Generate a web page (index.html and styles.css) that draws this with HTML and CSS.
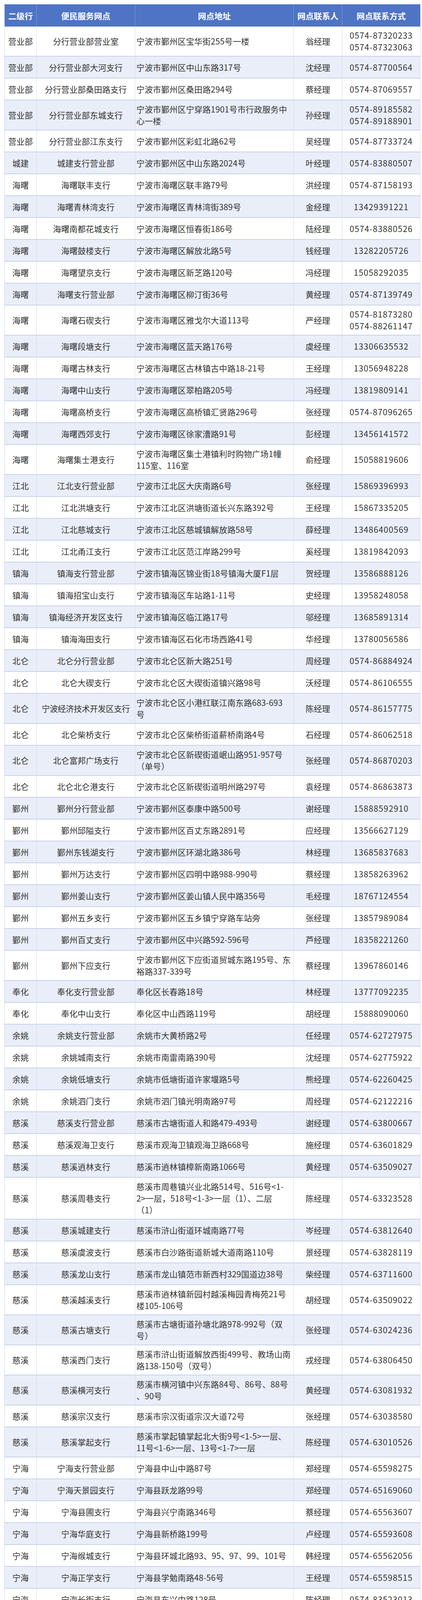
FILE: index.html
```html
<!DOCTYPE html>
<html lang="zh-CN">
<head>
<meta charset="utf-8">
<title>便民服务网点</title>
<link rel="stylesheet" href="styles.css">
</head>
<body>
<div class="page">
<table class="outlets">
<colgroup>
<col class="c-branch"><col class="c-name"><col class="c-addr"><col class="c-person"><col class="c-phone">
</colgroup>
<thead>
<tr><th>二级行</th><th>便民服务网点</th><th>网点地址</th><th>网点联系人</th><th>网点联系方式</th></tr>
</thead>
<tbody>
<tr><td>营业部</td><td>分行营业部营业室</td><td class="addr">宁波市鄞州区宝华街255号一楼</td><td>翁经理</td><td class="tel">0574-87320233<br>0574-87323063</td></tr>
<tr><td>营业部</td><td>分行营业部大河支行</td><td class="addr">宁波市鄞州区中山东路317号</td><td>沈经理</td><td class="tel">0574-87700564</td></tr>
<tr><td>营业部</td><td>分行营业部桑田路支行</td><td class="addr">宁波市鄞州区桑田路294号</td><td>蔡经理</td><td class="tel">0574-87069557</td></tr>
<tr><td>营业部</td><td>分行营业部东城支行</td><td class="addr">宁波市鄞州区宁穿路1901号市行政服务中<br>心一楼</td><td>孙经理</td><td class="tel">0574-89185582<br>0574-89188901</td></tr>
<tr><td>营业部</td><td>分行营业部江东支行</td><td class="addr">宁波市鄞州区彩虹北路62号</td><td>吴经理</td><td class="tel">0574-87733724</td></tr>
<tr><td>城建</td><td>城建支行营业部</td><td class="addr">宁波市鄞州区中山东路2024号</td><td>叶经理</td><td class="tel">0574-83880507</td></tr>
<tr><td>海曙</td><td>海曙联丰支行</td><td class="addr">宁波市海曙区联丰路79号</td><td>洪经理</td><td class="tel">0574-87158193</td></tr>
<tr><td>海曙</td><td>海曙青林湾支行</td><td class="addr">宁波市海曙区青林湾街389号</td><td>金经理</td><td class="tel">13429391221</td></tr>
<tr><td>海曙</td><td>海曙南都花城支行</td><td class="addr">宁波市海曙区恒春街186号</td><td>陆经理</td><td class="tel">0574-83880526</td></tr>
<tr><td>海曙</td><td>海曙鼓楼支行</td><td class="addr">宁波市海曙区解放北路5号</td><td>钱经理</td><td class="tel">13282205726</td></tr>
<tr><td>海曙</td><td>海曙望京支行</td><td class="addr">宁波市海曙区新芝路120号</td><td>冯经理</td><td class="tel">15058292035</td></tr>
<tr><td>海曙</td><td>海曙支行营业部</td><td class="addr">宁波市海曙区柳汀街36号</td><td>黄经理</td><td class="tel">0574-87139749</td></tr>
<tr><td>海曙</td><td>海曙石碶支行</td><td class="addr">宁波市海曙区雅戈尔大道113号</td><td>严经理</td><td class="tel">0574-81873280<br>0574-88261147</td></tr>
<tr><td>海曙</td><td>海曙段塘支行</td><td class="addr">宁波市海曙区蓝天路176号</td><td>虞经理</td><td class="tel">13306635532</td></tr>
<tr><td>海曙</td><td>海曙古林支行</td><td class="addr">宁波市海曙区古林镇古中路18-21号</td><td>王经理</td><td class="tel">13056948228</td></tr>
<tr><td>海曙</td><td>海曙中山支行</td><td class="addr">宁波市海曙区翠柏路205号</td><td>冯经理</td><td class="tel">13819809141</td></tr>
<tr><td>海曙</td><td>海曙高桥支行</td><td class="addr">宁波市海曙区高桥镇汇贤路296号</td><td>张经理</td><td class="tel">0574-87096265</td></tr>
<tr><td>海曙</td><td>海曙西郊支行</td><td class="addr">宁波市海曙区徐家漕路91号</td><td>彭经理</td><td class="tel">13456141572</td></tr>
<tr><td>海曙</td><td>海曙集士港支行</td><td class="addr">宁波市海曙区集士港镇利时购物广场1幢<br>115室、116室</td><td>俞经理</td><td class="tel">15058819606</td></tr>
<tr><td>江北</td><td>江北支行营业部</td><td class="addr">宁波市江北区大庆南路6号</td><td>张经理</td><td class="tel">15869396993</td></tr>
<tr><td>江北</td><td>江北洪塘支行</td><td class="addr">宁波市江北区洪塘街道长兴东路392号</td><td>王经理</td><td class="tel">15867335205</td></tr>
<tr><td>江北</td><td>江北慈城支行</td><td class="addr">宁波市江北区慈城镇解放路58号</td><td>薛经理</td><td class="tel">13486400569</td></tr>
<tr><td>江北</td><td>江北甬江支行</td><td class="addr">宁波市江北区范江岸路299号</td><td>奚经理</td><td class="tel">13819842093</td></tr>
<tr><td>镇海</td><td>镇海支行营业部</td><td class="addr">宁波市镇海区锦业街18号镇海大厦F1层</td><td>贺经理</td><td class="tel">13586888126</td></tr>
<tr><td>镇海</td><td>镇海招宝山支行</td><td class="addr">宁波市镇海区车站路1-11号</td><td>史经理</td><td class="tel">13958248058</td></tr>
<tr><td>镇海</td><td>镇海经济开发区支行</td><td class="addr">宁波市镇海区临江路17号</td><td>邬经理</td><td class="tel">13685891314</td></tr>
<tr><td>镇海</td><td>镇海海田支行</td><td class="addr">宁波市镇海区石化市场西路41号</td><td>华经理</td><td class="tel">13780056586</td></tr>
<tr><td>北仑</td><td>北仑分行营业部</td><td class="addr">宁波市北仑区新大路251号</td><td>周经理</td><td class="tel">0574-86884924</td></tr>
<tr><td>北仑</td><td>北仑大碶支行</td><td class="addr">宁波市北仑区大碶街道镇兴路98号</td><td>沃经理</td><td class="tel">0574-86106555</td></tr>
<tr><td>北仑</td><td class="tight">宁波经济技术开发区支行</td><td class="addr">宁波市北仑区小港红联江南东路683-693<br>号</td><td>陈经理</td><td class="tel">0574-86157775</td></tr>
<tr><td>北仑</td><td>北仑柴桥支行</td><td class="addr">宁波市北仑区柴桥街道薪桥南路4号</td><td>石经理</td><td class="tel">0574-86062518</td></tr>
<tr><td>北仑</td><td>北仑富邦广场支行</td><td class="addr">宁波市北仑区新碶街道岷山路951-957号<br>（单号）</td><td>张经理</td><td class="tel">0574-86870203</td></tr>
<tr><td>北仑</td><td>北仑北仑港支行</td><td class="addr">宁波市北仑区新碶街道明州路297号</td><td>袁经理</td><td class="tel">0574-86863873</td></tr>
<tr><td>鄞州</td><td>鄞州分行营业部</td><td class="addr">宁波市鄞州区泰康中路500号</td><td>谢经理</td><td class="tel">15888592910</td></tr>
<tr><td>鄞州</td><td>鄞州邱隘支行</td><td class="addr">宁波市鄞州区百丈东路2891号</td><td>应经理</td><td class="tel">13566627129</td></tr>
<tr><td>鄞州</td><td>鄞州东钱湖支行</td><td class="addr">宁波市鄞州区环湖北路386号</td><td>林经理</td><td class="tel">13685837683</td></tr>
<tr><td>鄞州</td><td>鄞州万达支行</td><td class="addr">宁波市鄞州区四明中路988-990号</td><td>蔡经理</td><td class="tel">13858263962</td></tr>
<tr><td>鄞州</td><td>鄞州姜山支行</td><td class="addr">宁波市鄞州区姜山镇人民中路356号</td><td>毛经理</td><td class="tel">18767124554</td></tr>
<tr><td>鄞州</td><td>鄞州五乡支行</td><td class="addr">宁波市鄞州区五乡镇宁穿路车站旁</td><td>张经理</td><td class="tel">13857989084</td></tr>
<tr><td>鄞州</td><td>鄞州百丈支行</td><td class="addr">宁波市鄞州区中兴路592-596号</td><td>芦经理</td><td class="tel">18358221260</td></tr>
<tr><td>鄞州</td><td>鄞州下应支行</td><td class="addr">宁波市鄞州区下应街道贸城东路195号、东<br>裕路337-339号</td><td>蔡经理</td><td class="tel">13967860146</td></tr>
<tr><td>奉化</td><td>奉化支行营业部</td><td class="addr">奉化区长春路18号</td><td>林经理</td><td class="tel">13777092235</td></tr>
<tr><td>奉化</td><td>奉化中山支行</td><td class="addr">奉化区中山西路119号</td><td>胡经理</td><td class="tel">15888090060</td></tr>
<tr><td>余姚</td><td>余姚支行营业部</td><td class="addr">余姚市大黄桥路2号</td><td>任经理</td><td class="tel">0574-62727975</td></tr>
<tr><td>余姚</td><td>余姚城南支行</td><td class="addr">余姚市南雷南路390号</td><td>沈经理</td><td class="tel">0574-62775922</td></tr>
<tr><td>余姚</td><td>余姚低塘支行</td><td class="addr">余姚市低塘街道许家堰路5号</td><td>熊经理</td><td class="tel">0574-62260425</td></tr>
<tr><td>余姚</td><td>余姚泗门支行</td><td class="addr">余姚市泗门镇光明南路97号</td><td>周经理</td><td class="tel">0574-62122216</td></tr>
<tr><td>慈溪</td><td>慈溪支行营业部</td><td class="addr">慈溪市古塘街道人和路479-493号</td><td>谢经理</td><td class="tel">0574-63800667</td></tr>
<tr><td>慈溪</td><td>慈溪观海卫支行</td><td class="addr">慈溪市观海卫镇观海卫路668号</td><td>施经理</td><td class="tel">0574-63601829</td></tr>
<tr><td>慈溪</td><td>慈溪逍林支行</td><td class="addr">慈溪市逍林镇樟新南路1066号</td><td>黄经理</td><td class="tel">0574-63509027</td></tr>
<tr><td>慈溪</td><td>慈溪周巷支行</td><td class="addr">慈溪市周巷镇兴业北路514号、516号&lt;1-<br>2&gt;一层，518号&lt;1-3&gt;一层（1）、二层<br>（1）</td><td>陈经理</td><td class="tel">0574-63323528</td></tr>
<tr><td>慈溪</td><td>慈溪城建支行</td><td class="addr">慈溪市浒山街道环城南路77号</td><td>岑经理</td><td class="tel">0574-63812640</td></tr>
<tr><td>慈溪</td><td>慈溪虞波支行</td><td class="addr">慈溪市白沙路街道新城大道南路110号</td><td>景经理</td><td class="tel">0574-63828119</td></tr>
<tr><td>慈溪</td><td>慈溪龙山支行</td><td class="addr">慈溪市龙山镇范市新西村329国道边38号</td><td>柴经理</td><td class="tel">0574-63711600</td></tr>
<tr><td>慈溪</td><td>慈溪越溪支行</td><td class="addr">慈溪市逍林镇新园村越溪梅园青梅苑21号<br>楼105-106号</td><td>胡经理</td><td class="tel">0574-63509022</td></tr>
<tr><td>慈溪</td><td>慈溪古塘支行</td><td class="addr">慈溪市古塘街道孙塘北路978-992号（双<br>号）</td><td>张经理</td><td class="tel">0574-63024236</td></tr>
<tr><td>慈溪</td><td>慈溪西门支行</td><td class="addr">慈溪市浒山街道解放西街499号、教场山南<br>路138-150号（双号）</td><td>戎经理</td><td class="tel">0574-63806450</td></tr>
<tr><td>慈溪</td><td>慈溪横河支行</td><td class="addr">慈溪市横河镇中兴东路84号、86号、88号<br>、90号</td><td>黄经理</td><td class="tel">0574-63081932</td></tr>
<tr><td>慈溪</td><td>慈溪宗汉支行</td><td class="addr">慈溪市宗汉街道宗汉大道72号</td><td>张经理</td><td class="tel">0574-63038580</td></tr>
<tr><td>慈溪</td><td>慈溪掌起支行</td><td class="addr">慈溪市掌起镇掌起北大街9号&lt;1-5&gt;一层、<br>11号&lt;1-6&gt;一层、13号&lt;1-7&gt;一层</td><td>陈经理</td><td class="tel">0574-63010526</td></tr>
<tr><td>宁海</td><td>宁海支行营业部</td><td class="addr">宁海县中山中路87号</td><td>郑经理</td><td class="tel">0574-65598275</td></tr>
<tr><td>宁海</td><td>宁海天景园支行</td><td class="addr">宁海县跃龙路99号</td><td>郑经理</td><td class="tel">0574-65169060</td></tr>
<tr><td>宁海</td><td>宁海县圃支行</td><td class="addr">宁海县兴宁南路346号</td><td>蔡经理</td><td class="tel">0574-65563607</td></tr>
<tr><td>宁海</td><td>宁海华庭支行</td><td class="addr">宁海县新桥路199号</td><td>卢经理</td><td class="tel">0574-65593608</td></tr>
<tr><td>宁海</td><td>宁海缑城支行</td><td class="addr">宁海县环城北路93、95、97、99、101号</td><td>韩经理</td><td class="tel">0574-65562056</td></tr>
<tr><td>宁海</td><td>宁海正学支行</td><td class="addr">宁海县学勉南路48-56号</td><td>王经理</td><td class="tel">0574-65598515</td></tr>
<tr><td>宁海</td><td>宁海长街支行</td><td class="addr">宁海县东兴中路128号</td><td>陈经理</td><td class="tel">0574-83523013</td></tr>
<tr><td>宁海</td><td>宁海梅林支行</td><td class="addr">宁海县梅林北路7号</td><td>叶经理</td><td class="tel">0574-65132028</td></tr>
<tr><td>象山</td><td>象山支行营业部</td><td class="addr">象山县丹东街道靖南大街320号</td><td>沈经理</td><td class="tel">13968396156</td></tr>
<tr><td>象山</td><td>象山石浦支行</td><td class="addr">象山县石浦镇金山路99号</td><td>张经理</td><td class="tel">18268628005</td></tr>
<tr><td>象山</td><td>象山丹西支行</td><td class="addr">象山县丹西街道创业路6号</td><td>杨经理</td><td class="tel">15058477770</td></tr>
<tr><td>象山</td><td>象山丹峰路支行</td><td class="addr">象山县丹峰西路33-35号</td><td>林经理</td><td class="tel">15888161939</td></tr>
<tr><td>象山</td><td>象山爵溪支行</td><td class="addr">象山县爵溪街道新瀛路26-1、26-2、26-3<br>、26-4</td><td>黄经理</td><td class="tel">18268322899</td></tr>
<tr><td>象山</td><td>象山涌金支行</td><td class="addr">象山县丹东街道丹南路582-588（双号）</td><td>奚经理</td><td class="tel">18258721036</td></tr>
<tr><td>前湾</td><td>前湾支行营业部</td><td class="addr">宁波市前湾新区滨海二路911号（前湾新区<br>金融广场内）</td><td>龚经理</td><td class="tel">15968428783</td></tr>
<tr><td>高新</td><td>高新支行营业部</td><td class="addr">宁波市高新区创苑路488号</td><td>王经理</td><td class="tel">13819843753</td></tr>
</tbody>
</table>
</div>
</body>
</html>
```

FILE: styles.css
```css
html, body {
  margin: 0;
  padding: 0;
  background: #ffffff;
}

.page {
  padding: 11px 5px 0 11px;
}

.outlets {
  width: 1064px;
  table-layout: fixed;
  border-collapse: separate;
  border-spacing: 0;
  border-left: 1px solid #c9d3ec;
  font-family: "Noto Sans CJK SC", sans-serif;
  font-size: 21px;
  line-height: 30px;
  color: #333333;
}

.c-branch { width: 82px; }
.c-name { width: 252px; }
.c-addr { width: 406px; }
.c-person { width: 124px; }
.c-phone { width: 200px; }

.outlets thead tr {
  height: 57px;
}

.outlets th {
  height: 57px;
  box-sizing: border-box;
  background: #4f74c6;
  color: #ffffff;
  font-weight: 700;
  text-align: center;
  vertical-align: middle;
  padding: 0 2px;
  white-space: nowrap;
  overflow: hidden;
  border-right: 1px solid #7f9bd8;
}

.outlets tbody tr {
  height: 56px;
}

.outlets tbody tr:nth-child(even) td {
  background: #e9eef9;
}

.outlets td {
  padding: 7px 3px 8px;
  text-align: center;
  vertical-align: middle;
  white-space: nowrap;
  border-right: 1px solid #d2daef;
  border-bottom: 2px solid #c6d1ea;
}

.outlets tbody tr:last-child td {
  border-bottom: 2px solid #8fa6d9;
}

.outlets td.addr {
  text-align: left;
  letter-spacing: 0.15px;
}

.outlets td.tel {
  letter-spacing: 1.1px;
}

.outlets td.tight {
  letter-spacing: -0.5px;
  padding: 7px 0 8px;
}
```
